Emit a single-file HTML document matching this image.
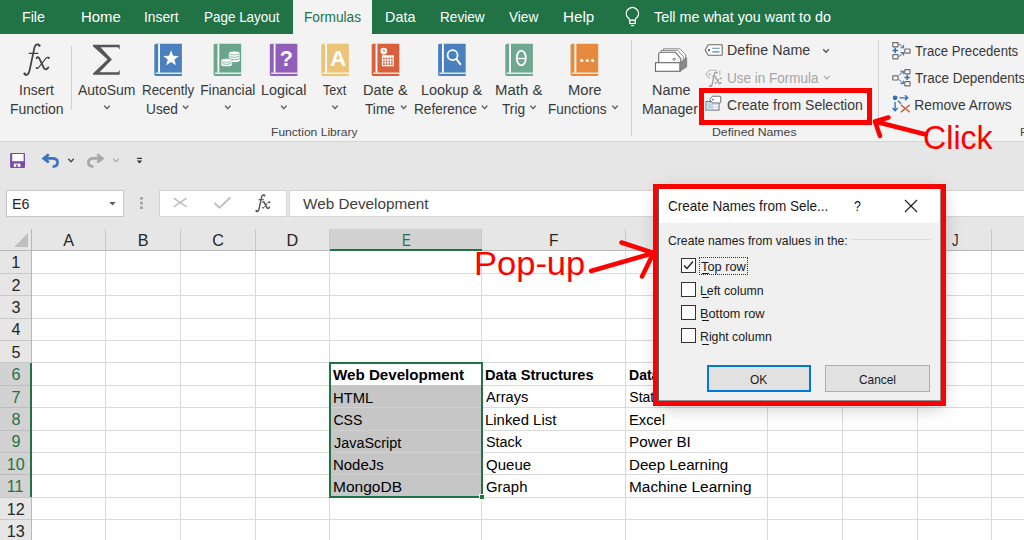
<!DOCTYPE html>
<html><head><meta charset="utf-8"><style>
html,body{margin:0;padding:0;width:1024px;height:540px;overflow:hidden;background:#e6e6e6}
body{position:relative;font-family:"Liberation Sans",sans-serif}
.t{position:absolute;white-space:pre;transform-origin:0 0}
</style></head><body>
<div style="position:absolute;left:0.00px;top:0.00px;width:1024.00px;height:34.00px;background:#217346"></div>
<div style="position:absolute;left:0.00px;top:34.00px;width:1024.00px;height:107.00px;background:#f3f3f3"></div>
<div style="position:absolute;left:0.00px;top:141.00px;width:1024.00px;height:1.00px;background:#d6d6d6"></div>
<div style="position:absolute;left:0.00px;top:142.00px;width:1024.00px;height:398.00px;background:#e6e6e6"></div>
<div style="position:absolute;left:293.00px;top:0.00px;width:79.00px;height:34.00px;background:#f3f3f3"></div>
<div class="t" style="left:22.23px;top:9.53px;font-size:14.50px;line-height:14.50px;color:#ffffff;transform:scaleX(0.9800);">File</div>
<div class="t" style="left:80.98px;top:9.53px;font-size:14.50px;line-height:14.50px;color:#ffffff;transform:scaleX(1.0259);">Home</div>
<div class="t" style="left:144.33px;top:9.53px;font-size:14.50px;line-height:14.50px;color:#ffffff;transform:scaleX(0.9506);">Insert</div>
<div class="t" style="left:203.60px;top:9.53px;font-size:14.50px;line-height:14.50px;color:#ffffff;transform:scaleX(0.9272);">Page Layout</div>
<div class="t" style="left:304.28px;top:9.53px;font-size:14.50px;line-height:14.50px;color:#217346;transform:scaleX(0.9435);">Formulas</div>
<div class="t" style="left:384.52px;top:9.53px;font-size:14.50px;line-height:14.50px;color:#ffffff;transform:scaleX(0.9919);">Data</div>
<div class="t" style="left:439.68px;top:9.53px;font-size:14.50px;line-height:14.50px;color:#ffffff;transform:scaleX(0.9377);">Review</div>
<div class="t" style="left:509.44px;top:9.53px;font-size:14.50px;line-height:14.50px;color:#ffffff;transform:scaleX(0.9395);">View</div>
<div class="t" style="left:563.35px;top:9.53px;font-size:14.50px;line-height:14.50px;color:#ffffff;transform:scaleX(1.0491);">Help</div>
<div class="t" style="left:654.38px;top:9.53px;font-size:14.50px;line-height:14.50px;color:#ffffff;transform:scaleX(0.9889);">Tell me what you want to do</div>
<div class="t" style="left:19.11px;top:84.32px;font-size:13.80px;line-height:13.80px;color:#383838;transform:scaleX(1.0139);">Insert</div>
<div class="t" style="left:10.45px;top:102.72px;font-size:13.80px;line-height:13.80px;color:#383838;transform:scaleX(1.0137);">Function</div>
<div class="t" style="left:78.47px;top:84.32px;font-size:13.80px;line-height:13.80px;color:#383838;transform:scaleX(1.0121);">AutoSum</div>
<div class="t" style="left:141.50px;top:84.32px;font-size:13.80px;line-height:13.80px;color:#383838;transform:scaleX(0.9708);">Recently</div>
<div class="t" style="left:145.94px;top:102.72px;font-size:13.80px;line-height:13.80px;color:#383838;transform:scaleX(0.9914);">Used</div>
<div class="t" style="left:200.17px;top:84.32px;font-size:13.80px;line-height:13.80px;color:#383838;">Financial</div>
<div class="t" style="left:260.82px;top:84.32px;font-size:13.80px;line-height:13.80px;color:#383838;transform:scaleX(1.0390);">Logical</div>
<div class="t" style="left:322.52px;top:84.32px;font-size:13.80px;line-height:13.80px;color:#383838;transform:scaleX(0.9157);">Text</div>
<div class="t" style="left:362.80px;top:84.32px;font-size:13.80px;line-height:13.80px;color:#383838;transform:scaleX(1.0578);">Date &amp;</div>
<div class="t" style="left:364.69px;top:102.72px;font-size:13.80px;line-height:13.80px;color:#383838;transform:scaleX(0.9918);">Time</div>
<div class="t" style="left:421.21px;top:84.32px;font-size:13.80px;line-height:13.80px;color:#383838;transform:scaleX(1.0480);">Lookup &amp;</div>
<div class="t" style="left:413.58px;top:102.72px;font-size:13.80px;line-height:13.80px;color:#383838;transform:scaleX(0.9867);">Reference</div>
<div class="t" style="left:494.57px;top:84.32px;font-size:13.80px;line-height:13.80px;color:#383838;transform:scaleX(1.0833);">Math &amp;</div>
<div class="t" style="left:501.59px;top:102.72px;font-size:13.80px;line-height:13.80px;color:#383838;transform:scaleX(0.9926);">Trig</div>
<div class="t" style="left:567.79px;top:84.32px;font-size:13.80px;line-height:13.80px;color:#383838;transform:scaleX(1.0675);">More</div>
<div class="t" style="left:548.09px;top:102.72px;font-size:13.80px;line-height:13.80px;color:#383838;transform:scaleX(0.9794);">Functions</div>
<div class="t" style="left:651.92px;top:84.32px;font-size:13.80px;line-height:13.80px;color:#383838;transform:scaleX(1.0466);">Name</div>
<div class="t" style="left:642.34px;top:102.72px;font-size:13.80px;line-height:13.80px;color:#383838;transform:scaleX(1.0263);">Manager</div>
<div class="t" style="left:726.53px;top:44.42px;font-size:13.80px;line-height:13.80px;color:#383838;transform:scaleX(1.0331);">Define Name</div>
<div class="t" style="left:726.66px;top:71.92px;font-size:13.80px;line-height:13.80px;color:#a6a6a6;transform:scaleX(0.9795);">Use in Formula</div>
<div class="t" style="left:726.59px;top:98.92px;font-size:13.80px;line-height:13.80px;color:#383838;transform:scaleX(1.0177);">Create from Selection</div>
<div class="t" style="left:915.10px;top:44.52px;font-size:13.80px;line-height:13.80px;color:#383838;transform:scaleX(0.9518);">Trace Precedents</div>
<div class="t" style="left:915.10px;top:71.92px;font-size:13.80px;line-height:13.80px;color:#383838;transform:scaleX(0.9758);">Trace Dependents</div>
<div class="t" style="left:914.27px;top:98.82px;font-size:13.80px;line-height:13.80px;color:#383838;">Remove Arrows</div>
<div class="t" style="left:270.81px;top:126.61px;font-size:11.80px;line-height:11.80px;color:#444444;transform:scaleX(1.0238);">Function Library</div>
<div class="t" style="left:711.79px;top:126.61px;font-size:11.80px;line-height:11.80px;color:#444444;transform:scaleX(1.0396);">Defined Names</div>
<div class="t" style="left:1020.03px;top:126.61px;font-size:11.80px;line-height:11.80px;color:#444444;">F</div>
<div style="position:absolute;left:71.00px;top:46.00px;width:1.00px;height:64.00px;background:#d0d0d0"></div>
<div style="position:absolute;left:631.00px;top:40.00px;width:1.00px;height:96.00px;background:#d0d0d0"></div>
<div style="position:absolute;left:878.00px;top:40.00px;width:1.00px;height:94.00px;background:#d0d0d0"></div>
<div style="position:absolute;left:6.00px;top:190.00px;width:118.00px;height:27.00px;background:#fff;border:1px solid #c6c6c6;box-sizing:border-box"></div>
<div class="t" style="left:11.83px;top:196.93px;font-size:14.50px;line-height:14.50px;color:#262626;transform:scaleX(0.9869);">E6</div>
<div style="position:absolute;left:159.00px;top:190.00px;width:128.00px;height:27.00px;background:#fff;border:1px solid #d4d4d4;box-sizing:border-box"></div>
<div style="position:absolute;left:289.00px;top:190.00px;width:735.00px;height:27.00px;background:#fff;border:1px solid #d4d4d4;box-sizing:border-box;border-right:none"></div>
<div class="t" style="left:303.03px;top:197.43px;font-size:14.50px;line-height:14.50px;color:#404040;transform:scaleX(1.0545);">Web Development</div>
<div style="position:absolute;left:0.00px;top:229.00px;width:1024.00px;height:21.00px;background:#e6e6e6"></div>
<div style="position:absolute;left:0.00px;top:251.00px;width:1024.00px;height:290.00px;background:#ffffff"></div>
<div style="position:absolute;left:0.00px;top:251.00px;width:31.00px;height:290.00px;background:#e6e6e6"></div>
<div style="position:absolute;left:105.00px;top:250.00px;width:1.00px;height:290.00px;background:#dadada"></div>
<div style="position:absolute;left:105.00px;top:229.00px;width:1.00px;height:22.00px;background:#c8c8c8"></div>
<div style="position:absolute;left:180.00px;top:250.00px;width:1.00px;height:290.00px;background:#dadada"></div>
<div style="position:absolute;left:180.00px;top:229.00px;width:1.00px;height:22.00px;background:#c8c8c8"></div>
<div style="position:absolute;left:255.00px;top:250.00px;width:1.00px;height:290.00px;background:#dadada"></div>
<div style="position:absolute;left:255.00px;top:229.00px;width:1.00px;height:22.00px;background:#c8c8c8"></div>
<div style="position:absolute;left:329.00px;top:250.00px;width:1.00px;height:290.00px;background:#dadada"></div>
<div style="position:absolute;left:329.00px;top:229.00px;width:1.00px;height:22.00px;background:#c8c8c8"></div>
<div style="position:absolute;left:481.00px;top:250.00px;width:1.00px;height:290.00px;background:#dadada"></div>
<div style="position:absolute;left:481.00px;top:229.00px;width:1.00px;height:22.00px;background:#c8c8c8"></div>
<div style="position:absolute;left:625.00px;top:250.00px;width:1.00px;height:290.00px;background:#dadada"></div>
<div style="position:absolute;left:625.00px;top:229.00px;width:1.00px;height:22.00px;background:#c8c8c8"></div>
<div style="position:absolute;left:767.00px;top:250.00px;width:1.00px;height:290.00px;background:#dadada"></div>
<div style="position:absolute;left:767.00px;top:229.00px;width:1.00px;height:22.00px;background:#c8c8c8"></div>
<div style="position:absolute;left:842.00px;top:250.00px;width:1.00px;height:290.00px;background:#dadada"></div>
<div style="position:absolute;left:842.00px;top:229.00px;width:1.00px;height:22.00px;background:#c8c8c8"></div>
<div style="position:absolute;left:917.00px;top:250.00px;width:1.00px;height:290.00px;background:#dadada"></div>
<div style="position:absolute;left:917.00px;top:229.00px;width:1.00px;height:22.00px;background:#c8c8c8"></div>
<div style="position:absolute;left:991.00px;top:250.00px;width:1.00px;height:290.00px;background:#dadada"></div>
<div style="position:absolute;left:991.00px;top:229.00px;width:1.00px;height:22.00px;background:#c8c8c8"></div>
<div style="position:absolute;left:31.00px;top:273.00px;width:993.00px;height:1.00px;background:#dadada"></div>
<div style="position:absolute;left:0.00px;top:273.00px;width:31.00px;height:1.00px;background:#c8c8c8"></div>
<div style="position:absolute;left:31.00px;top:295.00px;width:993.00px;height:1.00px;background:#dadada"></div>
<div style="position:absolute;left:0.00px;top:295.00px;width:31.00px;height:1.00px;background:#c8c8c8"></div>
<div style="position:absolute;left:31.00px;top:318.00px;width:993.00px;height:1.00px;background:#dadada"></div>
<div style="position:absolute;left:0.00px;top:318.00px;width:31.00px;height:1.00px;background:#c8c8c8"></div>
<div style="position:absolute;left:31.00px;top:340.00px;width:993.00px;height:1.00px;background:#dadada"></div>
<div style="position:absolute;left:0.00px;top:340.00px;width:31.00px;height:1.00px;background:#c8c8c8"></div>
<div style="position:absolute;left:31.00px;top:362.00px;width:993.00px;height:1.00px;background:#dadada"></div>
<div style="position:absolute;left:0.00px;top:362.00px;width:31.00px;height:1.00px;background:#c8c8c8"></div>
<div style="position:absolute;left:31.00px;top:385.00px;width:993.00px;height:1.00px;background:#dadada"></div>
<div style="position:absolute;left:0.00px;top:385.00px;width:31.00px;height:1.00px;background:#c8c8c8"></div>
<div style="position:absolute;left:31.00px;top:407.00px;width:993.00px;height:1.00px;background:#dadada"></div>
<div style="position:absolute;left:0.00px;top:407.00px;width:31.00px;height:1.00px;background:#c8c8c8"></div>
<div style="position:absolute;left:31.00px;top:430.00px;width:993.00px;height:1.00px;background:#dadada"></div>
<div style="position:absolute;left:0.00px;top:430.00px;width:31.00px;height:1.00px;background:#c8c8c8"></div>
<div style="position:absolute;left:31.00px;top:452.00px;width:993.00px;height:1.00px;background:#dadada"></div>
<div style="position:absolute;left:0.00px;top:452.00px;width:31.00px;height:1.00px;background:#c8c8c8"></div>
<div style="position:absolute;left:31.00px;top:474.00px;width:993.00px;height:1.00px;background:#dadada"></div>
<div style="position:absolute;left:0.00px;top:474.00px;width:31.00px;height:1.00px;background:#c8c8c8"></div>
<div style="position:absolute;left:31.00px;top:497.00px;width:993.00px;height:1.00px;background:#dadada"></div>
<div style="position:absolute;left:0.00px;top:497.00px;width:31.00px;height:1.00px;background:#c8c8c8"></div>
<div style="position:absolute;left:31.00px;top:519.00px;width:993.00px;height:1.00px;background:#dadada"></div>
<div style="position:absolute;left:0.00px;top:519.00px;width:31.00px;height:1.00px;background:#c8c8c8"></div>
<div style="position:absolute;left:31.00px;top:542.00px;width:993.00px;height:1.00px;background:#dadada"></div>
<div style="position:absolute;left:0.00px;top:542.00px;width:31.00px;height:1.00px;background:#c8c8c8"></div>
<div style="position:absolute;left:0.00px;top:250.00px;width:1024.00px;height:1.00px;background:#b8b8b8"></div>
<div style="position:absolute;left:31.00px;top:229.00px;width:1.00px;height:311.00px;background:#b8b8b8"></div>
<svg style="position:absolute;left:13px;top:233px" width="16" height="15"><polygon points="15,0 15,14 1,14" fill="#bfbfbf"/></svg>
<div style="position:absolute;left:330.00px;top:229.00px;width:151.00px;height:21.00px;background:#d2d2d2"></div>
<div style="position:absolute;left:330.00px;top:249.00px;width:152.00px;height:2.00px;background:#217346"></div>
<div style="position:absolute;left:0.00px;top:363.00px;width:31.00px;height:134.00px;background:#d2d2d2"></div>
<div style="position:absolute;left:30.00px;top:363.00px;width:2.00px;height:134.00px;background:#217346"></div>
<div style="position:absolute;left:0.00px;top:385.00px;width:30.00px;height:1.00px;background:#bdbdbd"></div>
<div style="position:absolute;left:0.00px;top:407.00px;width:30.00px;height:1.00px;background:#bdbdbd"></div>
<div style="position:absolute;left:0.00px;top:430.00px;width:30.00px;height:1.00px;background:#bdbdbd"></div>
<div style="position:absolute;left:0.00px;top:452.00px;width:30.00px;height:1.00px;background:#bdbdbd"></div>
<div style="position:absolute;left:0.00px;top:474.00px;width:30.00px;height:1.00px;background:#bdbdbd"></div>
<div class="t" style="left:63.35px;top:232.09px;font-size:16.20px;line-height:16.20px;color:#262626;">A</div>
<div class="t" style="left:137.86px;top:232.09px;font-size:16.20px;line-height:16.20px;color:#262626;">B</div>
<div class="t" style="left:212.30px;top:232.09px;font-size:16.20px;line-height:16.20px;color:#262626;">C</div>
<div class="t" style="left:286.62px;top:232.09px;font-size:16.20px;line-height:16.20px;color:#262626;">D</div>
<div class="t" style="left:401.56px;top:232.09px;font-size:16.20px;line-height:16.20px;color:#217346;transform:scaleX(0.8200);">E</div>
<div class="t" style="left:548.92px;top:232.09px;font-size:16.20px;line-height:16.20px;color:#262626;transform:scaleX(0.9598);">F</div>
<div class="t" style="left:690.65px;top:232.09px;font-size:16.20px;line-height:16.20px;color:#262626;">G</div>
<div class="t" style="left:799.65px;top:232.09px;font-size:16.20px;line-height:16.20px;color:#262626;">H</div>
<div class="t" style="left:878.25px;top:232.09px;font-size:16.20px;line-height:16.20px;color:#262626;">I</div>
<div class="t" style="left:951.84px;top:232.09px;font-size:16.20px;line-height:16.20px;color:#262626;transform:scaleX(0.8127);">J</div>
<div class="t" style="left:1039.77px;top:232.09px;font-size:16.20px;line-height:16.20px;color:#262626;">K</div>
<div class="t" style="left:11.27px;top:254.29px;font-size:16.20px;line-height:16.20px;color:#262626;">1</div>
<div class="t" style="left:11.50px;top:276.69px;font-size:16.20px;line-height:16.20px;color:#262626;">2</div>
<div class="t" style="left:11.54px;top:299.09px;font-size:16.20px;line-height:16.20px;color:#262626;">3</div>
<div class="t" style="left:11.55px;top:321.49px;font-size:16.20px;line-height:16.20px;color:#262626;">4</div>
<div class="t" style="left:11.51px;top:343.89px;font-size:16.20px;line-height:16.20px;color:#262626;">5</div>
<div class="t" style="left:11.44px;top:366.29px;font-size:16.20px;line-height:16.20px;color:#217346;">6</div>
<div class="t" style="left:11.49px;top:388.69px;font-size:16.20px;line-height:16.20px;color:#217346;">7</div>
<div class="t" style="left:11.50px;top:411.09px;font-size:16.20px;line-height:16.20px;color:#217346;">8</div>
<div class="t" style="left:11.50px;top:433.49px;font-size:16.20px;line-height:16.20px;color:#217346;">9</div>
<div class="t" style="left:6.69px;top:455.89px;font-size:16.20px;line-height:16.20px;color:#217346;">10</div>
<div class="t" style="left:6.77px;top:478.29px;font-size:16.20px;line-height:16.20px;color:#217346;">11</div>
<div class="t" style="left:6.78px;top:500.69px;font-size:16.20px;line-height:16.20px;color:#262626;">12</div>
<div class="t" style="left:6.73px;top:523.09px;font-size:16.20px;line-height:16.20px;color:#262626;">13</div>
<div style="position:absolute;left:331.00px;top:385.00px;width:150.00px;height:111.00px;background:#c6c6c6"></div>
<div style="position:absolute;left:331.00px;top:407.00px;width:150.00px;height:1.00px;background:#d0d0d0"></div>
<div style="position:absolute;left:331.00px;top:430.00px;width:150.00px;height:1.00px;background:#d0d0d0"></div>
<div style="position:absolute;left:331.00px;top:452.00px;width:150.00px;height:1.00px;background:#d0d0d0"></div>
<div style="position:absolute;left:331.00px;top:474.00px;width:150.00px;height:1.00px;background:#d0d0d0"></div>
<div style="position:absolute;left:329.00px;top:362.00px;width:154.00px;height:136.00px;border:2px solid #217346;box-sizing:border-box"></div>
<div style="position:absolute;left:479.00px;top:494.00px;width:6.00px;height:6.00px;background:#217346;border:1px solid #fff;box-sizing:border-box"></div>
<div class="t" style="left:333.29px;top:368.15px;font-size:14.00px;line-height:14.00px;color:#000000;font-weight:bold;transform:scaleX(1.0820);">Web Development</div>
<div class="t" style="left:485.32px;top:368.15px;font-size:14.00px;line-height:14.00px;color:#000000;font-weight:bold;transform:scaleX(1.0414);">Data Structures</div>
<div class="t" style="left:629.06px;top:368.15px;font-size:14.00px;line-height:14.00px;color:#000000;font-weight:bold;">Data Science</div>
<div class="t" style="left:332.99px;top:390.75px;font-size:14.00px;line-height:14.00px;color:#000000;transform:scaleX(1.0576);">HTML</div>
<div class="t" style="left:486.27px;top:390.35px;font-size:14.00px;line-height:14.00px;color:#000000;transform:scaleX(1.0447);">Arrays</div>
<div class="t" style="left:629.36px;top:390.35px;font-size:14.00px;line-height:14.00px;color:#000000;">Statistics</div>
<div class="t" style="left:333.49px;top:413.15px;font-size:14.00px;line-height:14.00px;color:#000000;">CSS</div>
<div class="t" style="left:485.08px;top:412.75px;font-size:14.00px;line-height:14.00px;color:#000000;transform:scaleX(1.0658);">Linked List</div>
<div class="t" style="left:628.79px;top:412.75px;font-size:14.00px;line-height:14.00px;color:#000000;transform:scaleX(1.0513);">Excel</div>
<div class="t" style="left:333.97px;top:435.55px;font-size:14.00px;line-height:14.00px;color:#000000;transform:scaleX(1.0286);">JavaScript</div>
<div class="t" style="left:485.65px;top:435.15px;font-size:14.00px;line-height:14.00px;color:#000000;transform:scaleX(1.0262);">Stack</div>
<div class="t" style="left:628.75px;top:435.15px;font-size:14.00px;line-height:14.00px;color:#000000;transform:scaleX(1.0890);">Power BI</div>
<div class="t" style="left:332.97px;top:457.95px;font-size:14.00px;line-height:14.00px;color:#000000;transform:scaleX(1.0673);">NodeJs</div>
<div class="t" style="left:485.59px;top:457.55px;font-size:14.00px;line-height:14.00px;color:#000000;transform:scaleX(1.0724);">Queue</div>
<div class="t" style="left:628.76px;top:457.55px;font-size:14.00px;line-height:14.00px;color:#000000;transform:scaleX(1.0802);">Deep Learning</div>
<div class="t" style="left:332.93px;top:480.35px;font-size:14.00px;line-height:14.00px;color:#000000;transform:scaleX(1.1082);">MongoDB</div>
<div class="t" style="left:485.55px;top:479.95px;font-size:14.00px;line-height:14.00px;color:#000000;transform:scaleX(1.0644);">Graph</div>
<div class="t" style="left:628.74px;top:479.95px;font-size:14.00px;line-height:14.00px;color:#000000;transform:scaleX(1.1003);">Machine Learning</div>
<svg style="position:absolute;left:0;top:0" width="1024" height="540"><g transform="translate(154.30,43.70)"><path d="M1.6 0H27.6V32.2H1.6Q0 32.2 0 30.6V1.6Q0 0 1.6 0Z" fill="#4b80bf"/><rect x="3.9" y="0" width="1.8" height="29" fill="#fff"/><rect x="1.3" y="28.9" width="26.3" height="1.2" fill="#fff"/><polygon points="16.80,6.50 18.83,12.01 24.69,12.24 20.08,15.87 21.68,21.51 16.80,18.25 11.92,21.51 13.52,15.87 8.91,12.24 14.77,12.01" fill="#fff"/></g><g transform="translate(213.60,43.70)"><path d="M1.6 0H27.6V32.2H1.6Q0 32.2 0 30.6V1.6Q0 0 1.6 0Z" fill="#6aa58c"/><rect x="3.9" y="0" width="1.8" height="29" fill="#fff"/><rect x="1.3" y="28.9" width="26.3" height="1.2" fill="#fff"/><g><path d="M15.20 9.30V16.60A5.50 1.90 0 0 0 26.20 16.60V9.30Z" fill="#fff"/><ellipse cx="20.70" cy="9.30" rx="5.50" ry="1.90" fill="#fff" stroke="#6aa58c" stroke-width="0.7"/><path d="M15.20 11.70A5.50 1.90 0 0 0 26.20 11.70" fill="none" stroke="#6aa58c" stroke-width="0.8"/><path d="M15.20 14.10A5.50 1.90 0 0 0 26.20 14.10" fill="none" stroke="#6aa58c" stroke-width="0.8"/></g><path d="M7.5 16.7A5.5 1.9 0 0 0 18.5 16.7V20.7A5.5 1.9 0 0 1 7.5 20.7Z" fill="#6aa58c" transform="translate(0,0)"/><g><path d="M7.50 16.70V20.70A5.50 1.90 0 0 0 18.50 20.70V16.70Z" fill="#fff"/><ellipse cx="13.00" cy="16.70" rx="5.50" ry="1.90" fill="#fff" stroke="#6aa58c" stroke-width="0.7"/><path d="M7.50 18.70A5.50 1.90 0 0 0 18.50 18.70" fill="none" stroke="#6aa58c" stroke-width="0.8"/></g></g><g transform="translate(269.80,43.70)"><path d="M1.6 0H27.6V32.2H1.6Q0 32.2 0 30.6V1.6Q0 0 1.6 0Z" fill="#915fba"/><rect x="3.9" y="0" width="1.8" height="29" fill="#fff"/><rect x="1.3" y="28.9" width="26.3" height="1.2" fill="#fff"/><text x="16.6" y="22.7" font-family="Liberation Sans" font-weight="bold" font-size="21.5" fill="#fff" text-anchor="middle">?</text></g><g transform="translate(321.30,43.70)"><path d="M1.6 0H27.6V32.2H1.6Q0 32.2 0 30.6V1.6Q0 0 1.6 0Z" fill="#ecc479"/><rect x="3.9" y="0" width="1.8" height="29" fill="#fff"/><rect x="1.3" y="28.9" width="26.3" height="1.2" fill="#fff"/><text x="16.8" y="22.7" font-family="Liberation Sans" font-weight="bold" font-size="22.5" fill="#fff" text-anchor="middle">A</text></g><g transform="translate(371.70,43.70)"><path d="M1.6 0H27.6V32.2H1.6Q0 32.2 0 30.6V1.6Q0 0 1.6 0Z" fill="#d9603b"/><rect x="3.9" y="0" width="1.8" height="29" fill="#fff"/><rect x="1.3" y="28.9" width="26.3" height="1.2" fill="#fff"/><circle cx="12.1" cy="7.4" r="3.4" fill="#fff"/><path d="M12.1 5.4V7.6H13.8" stroke="#d9603b" stroke-width="0.9" fill="none"/><rect x="10.2" y="11.5" width="11.9" height="11.1" fill="#fff"/><rect x="11.20" y="13.90" width="1.8" height="1.8" fill="#d9603b"/><rect x="13.80" y="13.90" width="1.8" height="1.8" fill="#d9603b"/><rect x="16.70" y="13.90" width="1.8" height="1.8" fill="#d9603b"/><rect x="19.30" y="13.90" width="1.8" height="1.8" fill="#d9603b"/><rect x="11.20" y="16.90" width="1.8" height="1.8" fill="#d9603b"/><rect x="13.80" y="16.90" width="1.8" height="1.8" fill="#d9603b"/><rect x="16.70" y="16.90" width="1.8" height="1.8" fill="#d9603b"/><rect x="19.30" y="16.90" width="1.8" height="1.8" fill="#d9603b"/><rect x="11.20" y="19.50" width="1.8" height="1.8" fill="#d9603b"/><rect x="13.80" y="19.50" width="1.8" height="1.8" fill="#d9603b"/><rect x="16.70" y="19.50" width="1.8" height="1.8" fill="#d9603b"/><rect x="19.30" y="19.50" width="1.8" height="1.8" fill="#d9603b"/></g><g transform="translate(438.10,43.70)"><path d="M1.6 0H27.6V32.2H1.6Q0 32.2 0 30.6V1.6Q0 0 1.6 0Z" fill="#4b80bf"/><rect x="3.9" y="0" width="1.8" height="29" fill="#fff"/><rect x="1.3" y="28.9" width="26.3" height="1.2" fill="#fff"/><circle cx="14.5" cy="11.5" r="5.0" fill="none" stroke="#fff" stroke-width="1.8"/><path d="M18.3 15.3L22.2 20.4" stroke="#fff" stroke-width="2.0" stroke-linecap="round"/></g><g transform="translate(505.30,43.70)"><path d="M1.6 0H27.6V32.2H1.6Q0 32.2 0 30.6V1.6Q0 0 1.6 0Z" fill="#6fa891"/><rect x="3.9" y="0" width="1.8" height="29" fill="#fff"/><rect x="1.3" y="28.9" width="26.3" height="1.2" fill="#fff"/><ellipse cx="16.0" cy="14.3" rx="4.5" ry="7.4" fill="none" stroke="#fff" stroke-width="1.9"/><path d="M11.5 14.8H20.5" stroke="#fff" stroke-width="1.2"/></g><g transform="translate(570.60,43.70)"><path d="M1.6 0H27.6V32.2H1.6Q0 32.2 0 30.6V1.6Q0 0 1.6 0Z" fill="#e88a3e"/><rect x="3.9" y="0" width="1.8" height="29" fill="#fff"/><rect x="1.3" y="28.9" width="26.3" height="1.2" fill="#fff"/><circle cx="11.2" cy="16.8" r="1.6" fill="#fff"/><circle cx="16.7" cy="16.8" r="1.6" fill="#fff"/><circle cx="22.0" cy="16.8" r="1.6" fill="#fff"/></g><path d="M629.8 20.3Q629.4 18.6 627.2 16.8A6.1 6.1 0 1 1 637.6 16.8Q635.4 18.6 635 20.3Z" fill="none" stroke="#fff" stroke-width="1.3"/><rect x="629.8" y="20.3" width="5.4" height="3.2" fill="none" stroke="#fff" stroke-width="1.2"/><path d="M631 25.6H634" stroke="#fff" stroke-width="1.2"/><g transform="translate(0.00,0.00) scale(1.0000)"><g fill="none" stroke="#404040" stroke-linecap="round"><path d="M39.4 45.4Q38.6 44.2 37 44.4Q35 44.8 34.2 48.6L30.2 67.5Q29 74.6 26.6 75Q25.1 75.2 24.5 73.9" stroke-width="1.70"/><path d="M29.2 53.3H37.9" stroke-width="1.20"/><path d="M36.6 58Q38 56.4 39.2 58.2L43.8 67.8Q45 70.2 47 68.8L48.4 67.4" stroke-width="1.80"/><path d="M48.7 57.6Q47.6 56.6 46 58.2L38.6 67.6Q37.6 68.9 36.6 68.4" stroke-width="1.10"/></g><circle cx="39.3" cy="45.6" r="1.20" fill="#404040"/><circle cx="24.7" cy="73.6" r="1.20" fill="#404040"/><circle cx="48.6" cy="57.9" r="1.10" fill="#404040"/><circle cx="36.7" cy="68.1" r="1.00" fill="#404040"/></g><path d="M93 44.8H119.7V49.5L118 47.3H100.5L111.9 59.6L99.5 72.3H118L119.7 70V74.8H93V73.4L107.6 59.6L93 46.2Z" fill="#555"/><path d="M104.25 105.60L107.00 108.60L109.75 105.60" stroke="#505050" stroke-width="1.3" fill="none"/><path d="M182.85 105.60L185.60 108.60L188.35 105.60" stroke="#505050" stroke-width="1.3" fill="none"/><path d="M225.05 105.60L227.80 108.60L230.55 105.60" stroke="#505050" stroke-width="1.3" fill="none"/><path d="M281.05 105.60L283.80 108.60L286.55 105.60" stroke="#505050" stroke-width="1.3" fill="none"/><path d="M332.25 105.60L335.00 108.60L337.75 105.60" stroke="#505050" stroke-width="1.3" fill="none"/><path d="M400.95 105.60L403.70 108.60L406.45 105.60" stroke="#505050" stroke-width="1.3" fill="none"/><path d="M481.85 105.60L484.60 108.60L487.35 105.60" stroke="#505050" stroke-width="1.3" fill="none"/><path d="M530.35 105.60L533.10 108.60L535.85 105.60" stroke="#505050" stroke-width="1.3" fill="none"/><path d="M612.25 105.60L615.00 108.60L617.75 105.60" stroke="#505050" stroke-width="1.3" fill="none"/><path d="M823.25 49.30L826.00 52.30L828.75 49.30" stroke="#505050" stroke-width="1.3" fill="none"/><path d="M824.05 76.00L826.80 79.00L829.55 76.00" stroke="#b0b0b0" stroke-width="1.3" fill="none"/><g stroke="#8a8a8a" stroke-width="1" fill="#fff"><path d="M663.5 48.8H679.2Q680 48.8 680.6 49.4L685.6 55V62H663.5Z"/><path d="M661 50.4H677Q677.8 50.4 678.4 51L683.4 56.6V62.5H661Z"/></g><path d="M658.7 62.5V54.2Q658.7 52.2 660.7 52.2H674.6Q675.4 52.2 676 52.8L680.8 58.6V62.5" fill="#fff" stroke="#6a6a6a" stroke-width="1.1"/><ellipse cx="674.2" cy="59.3" rx="1.3" ry="1.0" fill="none" stroke="#6a6a6a" stroke-width="0.9"/><rect x="655.5" y="62.7" width="24.5" height="8.6" fill="#fff" stroke="#6a6a6a" stroke-width="1.1"/><path d="M680 62.7L686.7 57.6V67L680 71.3Z" fill="#888" stroke="#6a6a6a" stroke-width="0.6"/><path d="M708.3 44.7H721.5Q722.2 44.7 722.2 45.4V54.6Q722.2 55.3 721.5 55.3H708.3L705.2 50Z" fill="#fff" stroke="#6a6a6a" stroke-width="1.1"/><circle cx="708.9" cy="50" r="1.2" fill="#6a6a6a"/><path d="M712.2 48.2H719.6M712.2 51.9H719.6" stroke="#4f86c6" stroke-width="1.1"/><path d="M717 70.2H709.2L705.8 74.2L709.8 78.4" fill="none" stroke="#b8b8b8" stroke-width="1.1"/><path d="M719.8 70.2V75" fill="none" stroke="#b8b8b8" stroke-width="1.1"/><circle cx="709.6" cy="74.2" r="1.0" fill="#a8a8a8"/><g transform="translate(698.60,51.80) scale(0.4600)"><g fill="none" stroke="#a0a0a0" stroke-linecap="round"><path d="M39.4 45.4Q38.6 44.2 37 44.4Q35 44.8 34.2 48.6L30.2 67.5Q29 74.6 26.6 75Q25.1 75.2 24.5 73.9" stroke-width="2.89"/><path d="M29.2 53.3H37.9" stroke-width="2.04"/><path d="M36.6 58Q38 56.4 39.2 58.2L43.8 67.8Q45 70.2 47 68.8L48.4 67.4" stroke-width="3.06"/><path d="M48.7 57.6Q47.6 56.6 46 58.2L38.6 67.6Q37.6 68.9 36.6 68.4" stroke-width="1.87"/></g><circle cx="39.3" cy="45.6" r="2.04" fill="#a0a0a0"/><circle cx="24.7" cy="73.6" r="2.04" fill="#a0a0a0"/><circle cx="48.6" cy="57.9" r="1.87" fill="#a0a0a0"/><circle cx="36.7" cy="68.1" r="1.70" fill="#a0a0a0"/></g><rect x="706" y="101.6" width="13" height="8.5" fill="#fff" stroke="#6a6a6a" stroke-width="1"/><rect x="706.5" y="102.1" width="6.5" height="7.5" fill="#c5d9f1"/><path d="M709.5 104.5H719M709.5 107H719M709.5 102V110M713 102V110M716 105V110" stroke="#b8c8dc" stroke-width="0.6"/><path d="M712.5 96.2H720Q720.8 96.2 720.8 97V102.2Q720.8 103 720 103H712.5L709.6 99.6Z" fill="#fff" stroke="#6a6a6a" stroke-width="1"/><circle cx="712.8" cy="99.6" r="0.9" fill="#6a6a6a"/><rect x="892.80" y="42.60" width="5.20" height="4.20" rx="0.4" fill="#fff" stroke="#6a6a6a" stroke-width="1.2"/><path d="M892.50 50.40H897.90M895.20 47.70V53.10" stroke="#2e6fba" stroke-width="1.5"/><rect x="892.80" y="54.60" width="5.20" height="4.20" rx="0.4" fill="#fff" stroke="#6a6a6a" stroke-width="1.2"/><rect x="904.80" y="49.00" width="5.20" height="4.20" rx="0.4" fill="#fff" stroke="#6a6a6a" stroke-width="1.2"/><path d="M899 43.8L903.2 47.6M903.6 44.8V47.8H900.6M899 56.6L903.2 52.8M903.6 55.6V52.6H900.6" stroke="#2e6fba" stroke-width="1" fill="none"/><rect x="892.80" y="75.80" width="5.20" height="4.20" rx="0.4" fill="#fff" stroke="#6a6a6a" stroke-width="1.2"/><rect x="904.80" y="69.60" width="5.20" height="4.20" rx="0.4" fill="#fff" stroke="#6a6a6a" stroke-width="1.2"/><path d="M904.50 77.40H909.90M907.20 74.70V80.10" stroke="#2e6fba" stroke-width="1.5"/><rect x="904.80" y="81.60" width="5.20" height="4.20" rx="0.4" fill="#fff" stroke="#6a6a6a" stroke-width="1.2"/><path d="M899 75.2L903.2 71.4M900.4 71.2H903.4V74.2M899 79.6L903.2 83.4M900.4 83.6H903.4V80.6" stroke="#2e6fba" stroke-width="1" fill="none"/><circle cx="895.1" cy="97.8" r="2.4" fill="#2e6fba"/><path d="M899.5 97.8H907.5M905 95.3L907.7 97.8L905 100.3M895.1 102V110.5M892.6 108L895.1 110.7L897.6 108M898 100.8L901 103.6" stroke="#2e6fba" stroke-width="1.3" fill="none"/><path d="M900.8 104.8L909.8 112.2M909.8 104.8L900.8 112.2" stroke="#d9502a" stroke-width="1.3"/><rect x="10.1" y="153" width="14.9" height="14.9" rx="0.8" fill="#7e4aa8"/><rect x="12.2" y="154" width="11.4" height="7.2" fill="#fff"/><rect x="13.9" y="163.6" width="6.5" height="3.4" fill="#fff"/><rect x="16.2" y="164.6" width="1.6" height="2.4" fill="#7e4aa8"/><path d="M48.8 154.4L43.6 158.4L48.8 162.4" stroke="#3a76c0" stroke-width="2.6" fill="none"/><path d="M44 158.4H52.4Q57.6 158.4 57.6 162.6Q57.6 166.6 52.6 166.6" stroke="#3a76c0" stroke-width="2.7" fill="none"/><path d="M68.25 158.70L71.00 161.70L73.75 158.70" stroke="#444" stroke-width="1.3" fill="none"/><path d="M97.2 154.4L102.4 158.4L97.2 162.4" stroke="#a8a8a8" stroke-width="2.6" fill="none"/><path d="M102 158.4H93.6Q88.4 158.4 88.4 162.6Q88.4 166.6 93.4 166.6" stroke="#a8a8a8" stroke-width="2.7" fill="none"/><path d="M113.25 158.70L116.00 161.70L118.75 158.70" stroke="#b0b0b0" stroke-width="1.3" fill="none"/><rect x="137" y="157.8" width="5" height="1.2" fill="#333"/><path d="M136.8 160.6H142.2L139.5 163.6Z" fill="#333"/><path d="M109.2 202H115.8L112.5 205.4Z" fill="#606060"/><g fill="#a4a4a4"><rect x="140" y="197" width="3" height="2.6"/><rect x="140" y="201.8" width="3" height="2.6"/><rect x="140" y="206.4" width="3" height="2.6"/></g><path d="M173.8 198.2L186.6 206.8M186.6 198.2L173.8 206.8" stroke="#bdbdbd" stroke-width="1.4" fill="none"/><path d="M214.5 203L219.5 207.8L230.3 197.5" stroke="#bdbdbd" stroke-width="1.8" fill="none"/><g transform="translate(242.95,170.66) scale(0.5450)"><g fill="none" stroke="#505050" stroke-linecap="round"><path d="M39.4 45.4Q38.6 44.2 37 44.4Q35 44.8 34.2 48.6L30.2 67.5Q29 74.6 26.6 75Q25.1 75.2 24.5 73.9" stroke-width="2.55"/><path d="M29.2 53.3H37.9" stroke-width="1.80"/><path d="M36.6 58Q38 56.4 39.2 58.2L43.8 67.8Q45 70.2 47 68.8L48.4 67.4" stroke-width="2.70"/><path d="M48.7 57.6Q47.6 56.6 46 58.2L38.6 67.6Q37.6 68.9 36.6 68.4" stroke-width="1.65"/></g><circle cx="39.3" cy="45.6" r="1.80" fill="#505050"/><circle cx="24.7" cy="73.6" r="1.80" fill="#505050"/><circle cx="48.6" cy="57.9" r="1.65" fill="#505050"/><circle cx="36.7" cy="68.1" r="1.50" fill="#505050"/></g></svg>
<div style="position:absolute;left:658.00px;top:188.00px;width:283.00px;height:213.00px;box-shadow:1px 5px 18px rgba(0,0,0,0.28);background:#f0f0f0;border:1px solid #909090;border-left-color:#606060;box-sizing:border-box"></div>
<div style="position:absolute;left:659.00px;top:189.00px;width:280.00px;height:34.00px;background:#ffffff"></div>
<div class="t" style="left:667.81px;top:198.50px;font-size:14.30px;line-height:14.30px;color:#1a1a1a;transform:scaleX(0.9477);">Create Names from Sele...</div>
<div class="t" style="left:854.29px;top:198.50px;font-size:14.30px;line-height:14.30px;color:#1a1a1a;transform:scaleX(0.8631);">?</div>
<svg style="position:absolute;left:904px;top:199px" width="14" height="14"><path d="M1 1L13 13M13 1L1 13" stroke="#1a1a1a" stroke-width="1.1"/></svg>
<div class="t" style="left:667.88px;top:234.80px;font-size:12.40px;line-height:12.40px;color:#1a1a1a;transform:scaleX(0.9841);">Create names from values in the:</div>
<div style="position:absolute;left:851.00px;top:239.00px;width:80.00px;height:1.00px;background:#d9d9d9"></div>
<div style="position:absolute;left:681.00px;top:258.00px;width:15.00px;height:15.00px;border:1px solid #333;background:#fff;box-sizing:border-box"></div>
<div class="t" style="left:701.21px;top:260.60px;font-size:12.40px;line-height:12.40px;color:#1a1a1a;transform:scaleX(1.0327);">Top row</div>
<div style="position:absolute;left:701.50px;top:273.00px;width:7.00px;height:1.00px;background:#1a1a1a"></div>
<div style="position:absolute;left:681.00px;top:282.00px;width:15.00px;height:15.00px;border:1px solid #333;background:#fff;box-sizing:border-box"></div>
<div class="t" style="left:700.49px;top:284.50px;font-size:12.40px;line-height:12.40px;color:#1a1a1a;transform:scaleX(0.9939);">Left column</div>
<div style="position:absolute;left:701.50px;top:297.00px;width:7.00px;height:1.00px;background:#1a1a1a"></div>
<div style="position:absolute;left:681.00px;top:305.00px;width:15.00px;height:15.00px;border:1px solid #333;background:#fff;box-sizing:border-box"></div>
<div class="t" style="left:700.45px;top:307.80px;font-size:12.40px;line-height:12.40px;color:#1a1a1a;transform:scaleX(1.0288);">Bottom row</div>
<div style="position:absolute;left:701.50px;top:320.00px;width:7.00px;height:1.00px;background:#1a1a1a"></div>
<div style="position:absolute;left:681.00px;top:328.00px;width:15.00px;height:15.00px;border:1px solid #333;background:#fff;box-sizing:border-box"></div>
<div class="t" style="left:700.49px;top:331.10px;font-size:12.40px;line-height:12.40px;color:#1a1a1a;transform:scaleX(0.9923);">Right column</div>
<div style="position:absolute;left:701.50px;top:344.00px;width:7.00px;height:1.00px;background:#1a1a1a"></div>
<svg style="position:absolute;left:681px;top:258px" width="15" height="15"><path d="M3 7.5L6 10.5L12 3.5" stroke="#1a1a1a" stroke-width="1.2" fill="none"/></svg>
<div style="position:absolute;left:699.00px;top:257.00px;width:49.00px;height:18.00px;border:1px dotted #333;box-sizing:border-box"></div>
<div style="position:absolute;left:707.00px;top:365.00px;width:104.00px;height:27.00px;background:#e1e1e1;border:2px solid #0078d7;box-sizing:border-box"></div>
<div class="t" style="left:749.83px;top:373.80px;font-size:12.40px;line-height:12.40px;color:#1a1a1a;transform:scaleX(0.9657);">OK</div>
<div style="position:absolute;left:825.00px;top:365.00px;width:105.00px;height:27.00px;background:#e1e1e1;border:1px solid #adadad;box-sizing:border-box"></div>
<div class="t" style="left:859.00px;top:373.80px;font-size:12.40px;line-height:12.40px;color:#1a1a1a;transform:scaleX(0.9585);">Cancel</div>
<div style="position:absolute;left:653.00px;top:184.00px;width:293.00px;height:222.00px;border:5px solid #ff0000;box-sizing:border-box"></div>
<div style="position:absolute;left:699.00px;top:88.00px;width:173.00px;height:37.00px;border:5px solid #ff0000;box-sizing:border-box"></div>
<div class="t" style="left:922.87px;top:120.64px;font-size:33.50px;line-height:33.50px;color:#ff0000;transform:scaleX(0.9602);">Click</div>
<div class="t" style="left:474.17px;top:247.97px;font-size:32.40px;line-height:32.40px;color:#ff0000;transform:scaleX(1.0651);">Pop-up</div>
<svg style="position:absolute;left:0;top:0" width="1024" height="540"><g stroke="#ff0000" stroke-width="4.5" stroke-linecap="round" fill="none"><path d="M926 134.5L875 121.5M875 121.5L888.5 117.5M875 121.5L880 136"/><path d="M591 271L653.5 253M653.5 253L621.5 242.5M653.5 253L642 276.5"/></g></svg>
</body></html>
